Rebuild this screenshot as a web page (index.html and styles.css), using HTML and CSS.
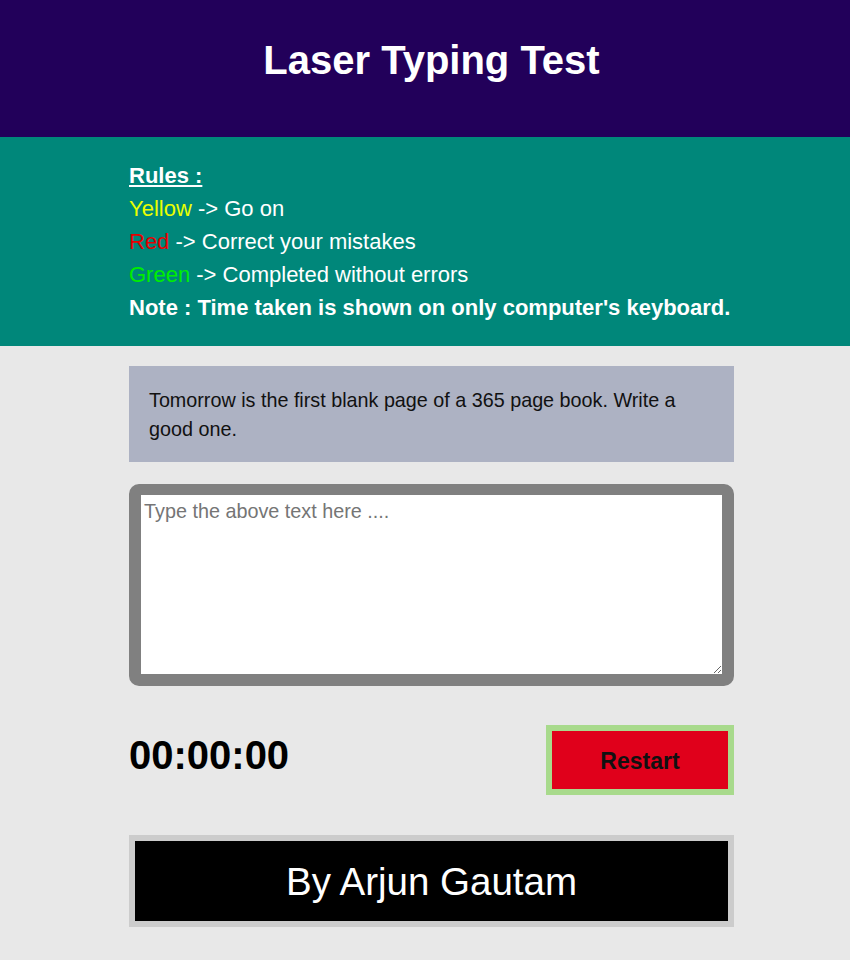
FILE: index.html
```html
<!DOCTYPE html>
<html>
<head>
<meta charset="utf-8">
<title>Laser Typing Test</title>
<link rel="stylesheet" href="styles.css">
</head>
<body>
<header class="header">
  <h1 class="title">Laser Typing Test</h1>
</header>
<section class="rules">
  <div class="container">
    <div class="rules-title">Rules :</div>
    <div class="rule"><span class="c-yellow">Yellow</span> -&gt; Go on</div>
    <div class="rule"><span class="c-red">Red</span> -&gt; Correct your mistakes</div>
    <div class="rule"><span class="c-green">Green</span> -&gt; Completed without errors</div>
    <div class="note">Note : Time taken is shown on only computer's keyboard.</div>
  </div>
</section>
<main class="container main">
  <div class="quote">Tomorrow is the first blank page of a 365 page book. Write a good one.</div>
  <textarea class="typing" placeholder="Type the above text here ...."></textarea>
  <div class="controls">
    <div class="timer">00:00:00</div>
    <button class="restart">Restart</button>
  </div>
  <footer class="credit">By Arjun Gautam</footer>
</main>
</body>
</html>
```
FILE: styles.css
```css
* { box-sizing: border-box; }
html, body {
  margin: 0;
  padding: 0;
  background: #e8e8e8;
  font-family: "Liberation Sans", Arial, sans-serif;
}
.header {
  background: #22005a;
  height: 137px;
  display: flex;
  justify-content: center;
  padding-left: 13px;
}
.title {
  margin: 38px 0 0;
  color: #fff;
  font-size: 40px;
  font-weight: bold;
  line-height: 44px;
}
.container {
  width: 605px;
  margin-left: 129px;
}
.rules {
  background: #00877a;
  color: #fff;
  padding: 22px 0 22px;
  font-size: 22px;
  line-height: 33px;
}
.rules-title {
  font-weight: bold;
  text-decoration: underline;
}
.note { font-weight: bold; }
.c-yellow { color: #eaff00; }
.c-red { color: #e60000; }
.c-green { color: #00ee00; }
.main {
  padding-top: 20px;
  padding-bottom: 40px;
}
.quote {
  background: #adb2c3;
  padding: 20px 20px 18px;
  font-size: 19.75px;
  line-height: 29px;
  color: #111;
  height: 96px;
}
.typing {
  display: block;
  width: 605px;
  height: 202px;
  margin-top: 22px;
  border: 12px solid #808080;
  border-top-width: 11px;
  border-bottom-width: 12px;
  border-radius: 10px;
  padding: 3px;
  font-family: "Liberation Sans", Arial, sans-serif;
  font-size: 19.8px;
  line-height: 26px;
  background: #fff;
  outline: none;
}
.typing::placeholder { color: #757575; }
.controls {
  display: flex;
  justify-content: space-between;
  align-items: flex-start;
  margin-top: 39px;
}
.timer {
  font-size: 40px;
  font-weight: bold;
  line-height: 44px;
  margin-top: 8px;
  color: #000;
}
.restart {
  width: 188px;
  height: 70px;
  background: #e0001b;
  border: 6px solid #a8da8c;
  font-family: "Liberation Sans", Arial, sans-serif;
  font-size: 23px;
  font-weight: bold;
  color: #111;
  padding: 2px 0 0;
}
.credit {
  margin-top: 40px;
  background: #000;
  border: 6px solid #cccccc;
  color: #fff;
  font-size: 38.5px;
  height: 92px;
  display: flex;
  align-items: center;
  justify-content: center;
  padding-top: 1px;
}
```
